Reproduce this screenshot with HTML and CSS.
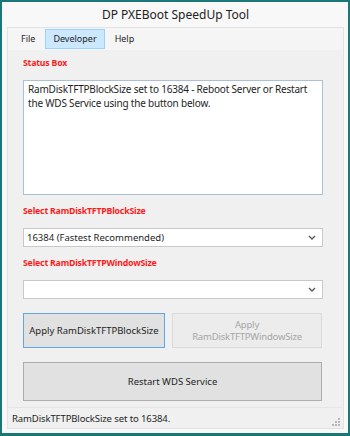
FILE: index.html
```html
<!DOCTYPE html>
<html lang="en">
<head>
    <meta charset="UTF-8">
    <title>DP PXEBoot SpeedUp Tool</title>
    <link rel="stylesheet" href="styles.css">
</head>
<body>
    <div class="window">
        <div class="titlebar">DP PXEBoot SpeedUp Tool</div>
        <div class="client">
            <div class="menubar">
                <span class="menu-item">File</span>
                <span class="menu-item active">Developer</span>
                <span class="menu-item">Help</span>
            </div>

            <div class="content">
                <div class="label first">Status Box</div>
                <div class="status-box">RamDiskTFTPBlockSize set to 16384 - Reboot Server or Restart the WDS Service using the button below.</div>

                <div class="label">Select RamDiskTFTPBlockSize</div>
                <div class="combo">
                    <span>16384 (Fastest Recommended)</span>
                    <svg width="8" height="5" viewBox="0 0 8 5"><path d="M1 1 L4 4 L7 1" fill="none" stroke="#555" stroke-width="1.3"/></svg>
                </div>

                <div class="label">Select RamDiskTFTPWindowSize</div>
                <div class="combo">
                    <span></span>
                    <svg width="8" height="5" viewBox="0 0 8 5"><path d="M1 1 L4 4 L7 1" fill="none" stroke="#555" stroke-width="1.3"/></svg>
                </div>

                <div class="btn-row">
                    <button class="btn focused">Apply RamDiskTFTPBlockSize</button>
                    <button class="btn disabled">Apply<br>RamDiskTFTPWindowSize</button>
                </div>
                <button class="btn wide">Restart WDS Service</button>
            </div>

            <div class="statusbar">
                <span>RamDiskTFTPBlockSize set to 16384.</span>
                <svg class="grip" width="9" height="9" viewBox="0 0 9 9">
                    <rect x="7" y="1" width="2" height="2" fill="#b8b8b8"/>
                    <rect x="4" y="4" width="2" height="2" fill="#b8b8b8"/>
                    <rect x="7" y="4" width="2" height="2" fill="#b8b8b8"/>
                    <rect x="1" y="7" width="2" height="2" fill="#b8b8b8"/>
                    <rect x="4" y="7" width="2" height="2" fill="#b8b8b8"/>
                    <rect x="7" y="7" width="2" height="2" fill="#b8b8b8"/>
                </svg>
            </div>
        </div>
    </div>
</body>
</html>
```

FILE: styles.css
```css
body {
    margin: 0;
    font-family: "Noto Sans", "Open Sans", sans-serif;
    font-size: 10px;
    color: #1e1e1e;
    background-color: #1b7777;
}

.window {
    width: 350px;
    height: 436px;
    box-sizing: border-box;
    border: 2px solid #1b7777;
    border-bottom-width: 3px;
    background-color: #f8f8f8;
    padding: 0 4px 4px 5px;
    display: flex;
    flex-direction: column;
}

.titlebar {
    height: 25px;
    line-height: 26px;
    text-align: center;
    font-size: 12px;
    color: #222;
}

.client {
    flex: 1;
    display: flex;
    flex-direction: column;
    background-color: #f0f0f0;
    border: 1px solid #e2e2e2;
}

.menubar {
    height: 22px;
    display: flex;
    align-items: center;
    padding-left: 5px;
    background-color: #f5f5f5;
    font-size: 9px;
}

.menu-item {
    height: 18px;
    line-height: 18px;
    padding: 0 7px;
    margin-right: 2px;
    border: 1px solid transparent;
}

.menu-item.active {
    background-color: #cce8ff;
    border-color: #99d1ff;
}

.content {
    flex: 1;
    padding: 5px 20px 0 15px;
    display: flex;
    flex-direction: column;
}

.label {
    height: 16px;
    line-height: 16px;
    font-size: 8.75px;
    font-weight: bold;
    letter-spacing: -0.2px;
    color: #ff1a1a;
    margin: 8px 0 9px 0;
}

.label.first {
    margin-top: 0;
}

.status-box {
    height: 115px;
    box-sizing: border-box;
    background-color: #fff;
    border: 1px solid #a9c0da;
    padding: 1px 4px;
    line-height: 14px;
    letter-spacing: -0.2px;
}

.combo {
    height: 19px;
    box-sizing: border-box;
    background-color: #fff;
    border: 1px solid #c9c9c9;
    display: flex;
    align-items: center;
    justify-content: space-between;
    padding: 0 6px 0 3px;
    font-size: 9.5px;
}

.btn-row {
    display: flex;
    gap: 7px;
    margin-top: 14px;
}

.btn {
    font-family: inherit;
    font-size: 9.5px;
    color: #1e1e1e;
    background-color: #e1e1e1;
    border: 1px solid #adadad;
    padding: 0;
    margin: 0;
    height: 35px;
    line-height: 12px;
}

.btn.focused {
    width: 142px;
    border-color: #5fa7e8;
}

.btn.disabled {
    width: 150px;
    color: #a6a6a6;
    background-color: #ececec;
    border-color: #dadada;
    letter-spacing: -0.2px;
}

.btn.wide {
    width: 299px;
    height: 39px;
    margin-top: 14px;
}

.statusbar {
    height: 20px;
    border-top: 1px solid #e6e6e6;
    display: flex;
    align-items: center;
    justify-content: space-between;
    padding: 0 3px 0 4px;
    font-size: 9.5px;
    letter-spacing: -0.1px;
}

.grip {
    margin-top: 6px;
}
```
